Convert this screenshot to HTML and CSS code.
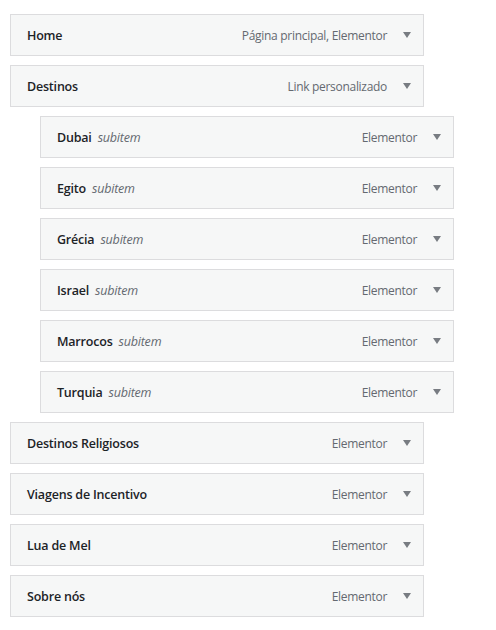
FILE: index.html
```html
<!DOCTYPE html>
<html lang="pt">
<head>
<meta charset="utf-8">
<link rel="stylesheet" href="styles.css">
</head>
<body>
<ul class="menu">
  <li class="item"><span class="title">Home</span><span class="type">Página principal, Elementor</span><span class="arrow"></span></li>
  <li class="item"><span class="title">Destinos</span><span class="type">Link personalizado</span><span class="arrow"></span></li>
  <li class="item sub"><span class="title">Dubai</span><span class="subtag">subitem</span><span class="type">Elementor</span><span class="arrow"></span></li>
  <li class="item sub"><span class="title">Egito</span><span class="subtag">subitem</span><span class="type">Elementor</span><span class="arrow"></span></li>
  <li class="item sub"><span class="title">Grécia</span><span class="subtag">subitem</span><span class="type">Elementor</span><span class="arrow"></span></li>
  <li class="item sub"><span class="title">Israel</span><span class="subtag">subitem</span><span class="type">Elementor</span><span class="arrow"></span></li>
  <li class="item sub"><span class="title">Marrocos</span><span class="subtag">subitem</span><span class="type">Elementor</span><span class="arrow"></span></li>
  <li class="item sub"><span class="title">Turquia</span><span class="subtag">subitem</span><span class="type">Elementor</span><span class="arrow"></span></li>
  <li class="item"><span class="title">Destinos Religiosos</span><span class="type">Elementor</span><span class="arrow"></span></li>
  <li class="item"><span class="title">Viagens de Incentivo</span><span class="type">Elementor</span><span class="arrow"></span></li>
  <li class="item"><span class="title">Lua de Mel</span><span class="type">Elementor</span><span class="arrow"></span></li>
  <li class="item"><span class="title">Sobre nós</span><span class="type">Elementor</span><span class="arrow"></span></li>
</ul>
</body>
</html>
```
FILE: styles.css
```css
html, body {
  margin: 0;
  padding: 0;
  background: #ffffff;
}
body {
  font-family: "Open Sans", "Noto Sans", "Liberation Sans", sans-serif;
  font-size: 13px;
}
.menu {
  list-style: none;
  margin: 0;
  padding: 14px 0 0 10px;
  display: flex;
  flex-direction: column;
  gap: 9px;
}
.item {
  box-sizing: border-box;
  width: 414px;
  height: 42px;
  border: 1px solid #dcdcde;
  background: #f6f7f7;
  display: flex;
  align-items: center;
  padding: 0 12px 0 16px;
}
.item.sub {
  margin-left: 30px;
}
.title {
  font-weight: 600;
  color: #1d2327;
  font-size: 12.5px;
  letter-spacing: -0.2px;
}
.subtag {
  font-style: italic;
  color: #646970;
  margin-left: 6px;
  font-size: 12.5px;
  letter-spacing: -0.2px;
}
.type {
  margin-left: auto;
  color: #646970;
  font-size: 12px;
  letter-spacing: -0.3px;
}
.arrow {
  width: 0;
  height: 0;
  border-left: 4px solid transparent;
  border-right: 4px solid transparent;
  border-top: 6px solid #787c82;
  margin-left: 16px;
}
```
